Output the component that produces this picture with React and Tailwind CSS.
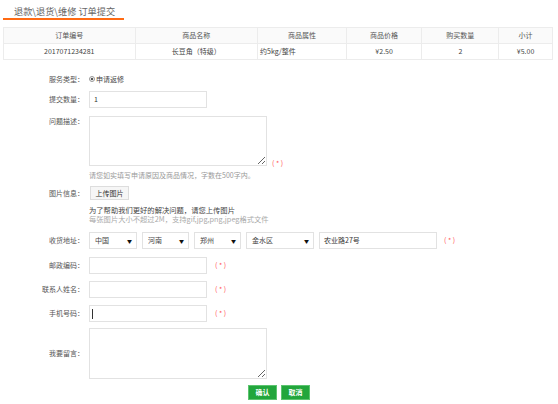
import React from "react";

const cols = [
  { title: "订单编号", value: "2017071234281", w: "w-[132px]", align: "text-center" },
  { title: "商品名称", value: "长豆角（特级）", w: "w-[123px]", align: "text-center" },
  { title: "商品属性", value: "约5kg/整件", w: "w-[89px]", align: "text-left pl-[2px]" },
  { title: "商品价格", value: "¥2.50", w: "w-[76px]", align: "text-center" },
  { title: "购买数量", value: "2", w: "w-[77px]", align: "text-center" },
  { title: "小计", value: "¥5.00", w: "w-[53px]", align: "text-center" },
];

const Required = ({ className = "" }) => (
  <div className={"text-[7px] leading-[9px] text-[#f55] whitespace-pre " + className}>( * )</div>
);

const Label = ({ children, className = "" }) => (
  <div className={"w-[85px] shrink-0 text-right pr-[1px] text-[7px] leading-[9px] text-[#555] " + className}>
    {children}
  </div>
);

const Select = ({ label, w }) => (
  <div className={"h-[17px] border border-[#e2e2e2] bg-white flex items-center justify-between pl-[5px] pr-[4px] leading-none " + w}>
    <span className="text-[7px] text-[#444]">{label}</span>
    <span className="text-[5px] text-[#111]">▼</span>
  </div>
);

const TextInput = ({ value = "", w = "w-[118px]", caret = false }) => (
  <div className={"relative h-[17px] border border-[#e2e2e2] bg-white flex items-center pl-[4px] leading-none " + w}>
    <span className="text-[7px] text-[#333]">{value}</span>
    {caret && <span className="absolute left-[2px] top-[3px] w-px h-[10px] bg-[#333]" />}
  </div>
);

export default function App() {
  return (
    <div className="w-[558px] h-[404px] bg-white overflow-hidden font-['Noto_Sans_CJK_SC','Noto_Sans',sans-serif]">
      {/* title */}
      <div className="pl-[3px] pt-[3px]">
        <div className="w-[121px] h-[17px] border-b-2 border-[#ff6a13] pl-[11px] pt-[2px] text-[9.2px] leading-[12px] text-[#666] whitespace-pre">
          退款\退货\维修 订单提交
        </div>
      </div>

      {/* order table */}
      <div className="mt-[7px] ml-[3px] w-[550px] border border-[#ececec]">
        <div className="flex bg-[#fafafa] border-b border-[#ececec]">
          {cols.map((c, i) => (
            <div
              key={c.title}
              className={`${c.w} h-[15px] flex items-center justify-center text-[7px] leading-none text-[#555] ${i < cols.length - 1 ? "border-r border-[#ececec]" : ""}`}
            >
              {c.title}
            </div>
          ))}
        </div>
        <div className="flex">
          {cols.map((c, i) => (
            <div
              key={c.title}
              className={`${c.w} ${c.align} h-[15px] leading-[15px] text-[7px] text-[#444] ${i < cols.length - 1 ? "border-r border-[#ececec]" : ""}`}
            >
              {c.value}
            </div>
          ))}
        </div>
      </div>

      {/* form */}
      <div className="flex flex-col">
        <div className="mt-[12px] h-[14px] flex items-center gap-[4px]">
          <Label>服务类型：</Label>
          <div className="flex items-center gap-[1px] leading-none">
            <span className="w-[6px] h-[6px] rounded-full border border-[#999] bg-[#eee] flex items-center justify-center">
              <span className="w-[2px] h-[2px] rounded-full bg-[#222]" />
            </span>
            <span className="text-[7px] text-[#444]">申请返修</span>
          </div>
        </div>

        <div className="mt-[5px] h-[17px] flex items-center gap-[4px]">
          <Label>提交数量：</Label>
          <TextInput value="1" />
        </div>

        <div className="mt-[8px] flex items-start gap-[4px]">
          <Label className="pt-[1px]">问题描述：</Label>
          <textarea className="block w-[178px] h-[50px] border border-[#e2e2e2] outline-none text-[7px]" />
          <Required className="self-end ml-[1px] mb-[-2px]" />
        </div>

        <div className="mt-[5px] h-[9px] pl-[89px] text-[7px] leading-[9px] text-[#999]">
          请您如实填写申请原因及商品情况，字数在500字内。
        </div>

        <div className="mt-[6px] h-[14px] flex items-center gap-[5px]">
          <Label>图片信息：</Label>
          <button className="h-[14px] w-[39px] border border-[#ddd] bg-[#f6f6f6] text-[7px] leading-none text-[#333] flex items-center justify-center">
            上传图片
          </button>
        </div>

        <div className="mt-[6px] pl-[89px] text-[7.3px] leading-[9px] text-[#444]">
          为了帮助我们更好的解决问题，请您上传图片
        </div>
        <div className="pl-[89px] text-[7.3px] leading-[9px] text-[#aaa]">
          每张图片大小不超过2M，支持gif,jpg,png,jpeg格式文件
        </div>

        <div className="mt-[8px] h-[17px] flex items-center gap-[4px]">
          <Label>收货地址：</Label>
          <div className="flex items-center gap-[5px]">
            <Select label="中国" w="w-[48px]" />
            <Select label="河南" w="w-[47px]" />
            <Select label="郑州" w="w-[47px]" />
            <Select label="金水区" w="w-[68px]" />
            <TextInput value="农业路27号" />
          </div>
          <Required className="ml-[3px]" />
        </div>

        {[
          { label: "邮政编码：", mt: "mt-[8px]" },
          { label: "联系人姓名：", mt: "mt-[7px]" },
          { label: "手机号码：", mt: "mt-[7px]", caret: true },
        ].map((r) => (
          <div key={r.label} className={`${r.mt} h-[17px] flex items-center gap-[4px]`}>
            <Label>{r.label}</Label>
            <TextInput caret={r.caret} />
            <Required className="ml-[4px]" />
          </div>
        ))}

        <div className="mt-[6px] flex items-center gap-[4px]">
          <Label>我要留言：</Label>
          <textarea className="block w-[178px] h-[51px] border border-[#e2e2e2] outline-none text-[7px]" />
        </div>

        <div className="mt-[6px] flex gap-[4px] pl-[248px]">
          <button className="w-[29px] h-[15px] bg-[#22a63c] border border-[#5cc46f] text-white text-[7px] leading-none font-bold flex items-center justify-center">
            确认
          </button>
          <button className="w-[29px] h-[15px] bg-[#22a63c] border border-[#5cc46f] text-white text-[7px] leading-none font-bold flex items-center justify-center">
            取消
          </button>
        </div>
      </div>
    </div>
  );
}
